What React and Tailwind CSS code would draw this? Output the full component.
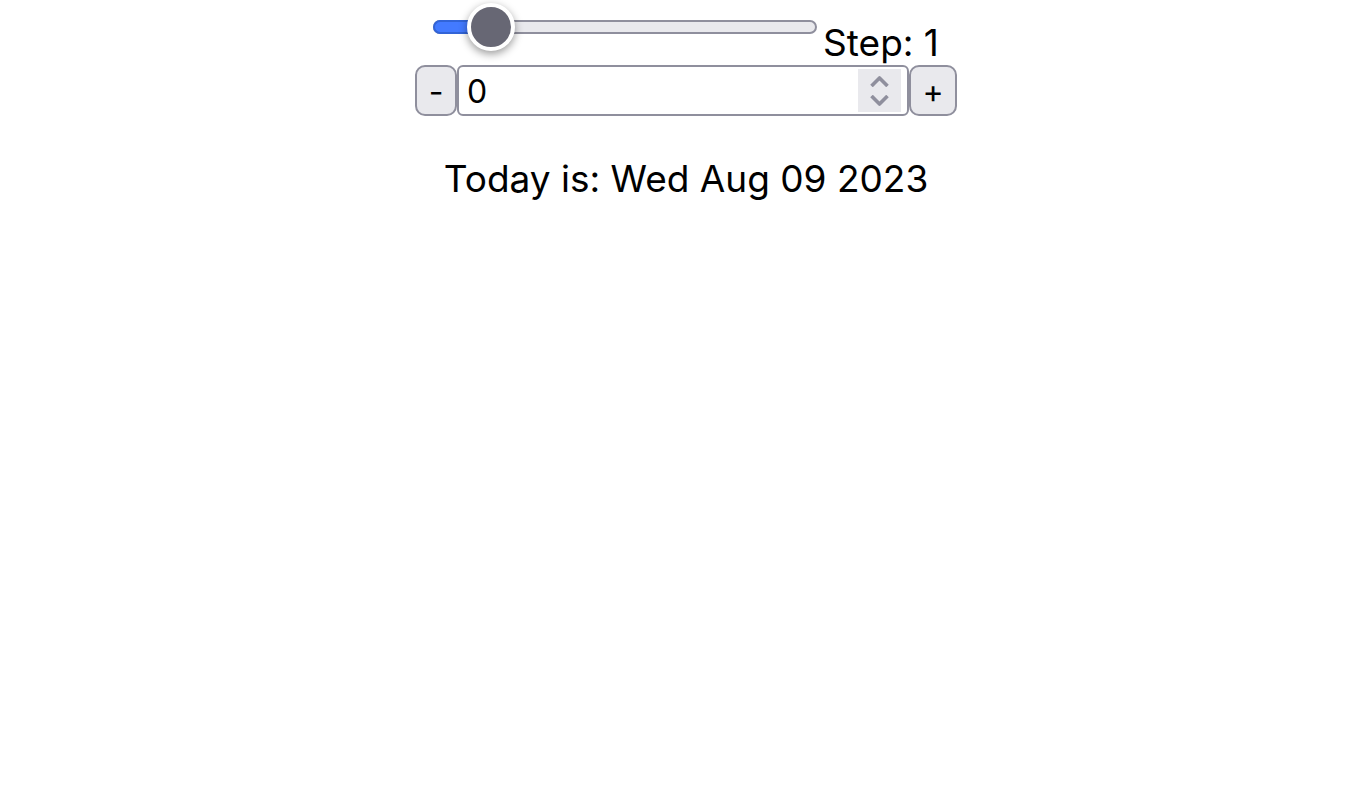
import { useState } from "react";

const BASE_DATE = [2023, 7, 9];

function StepSlider({ value, onChange }) {
  const min = 0;
  const max = 10;
  const ratio = (value - min) / (max - min);
  return (
    <div className="relative flex h-12 w-96 items-center">
      <div className="h-[14px] w-full overflow-hidden rounded-full border-2 border-[#8f8f9d] bg-[#e9e9ed]" />
      <div
        className="absolute left-0 h-[14px] rounded-l-full border-2 border-r-0 border-[#3264d7] bg-[#437aff]"
        style={{ width: `calc(24px + (100% - 48px) * ${ratio})` }}
      />
      <input
        id="step"
        type="range"
        min={min}
        max={max}
        value={value}
        onChange={(e) => onChange(Number(e.target.value))}
        className="absolute inset-0 m-0 w-full cursor-pointer appearance-none bg-transparent outline-none [&::-webkit-slider-thumb]:h-12 [&::-webkit-slider-thumb]:w-12 [&::-webkit-slider-thumb]:appearance-none [&::-webkit-slider-thumb]:rounded-full [&::-webkit-slider-thumb]:border-4 [&::-webkit-slider-thumb]:border-white [&::-webkit-slider-thumb]:bg-[#676774] [&::-webkit-slider-thumb]:shadow-[0_3px_8px_rgba(0,0,0,0.4)]"
      />
    </div>
  );
}

function Chevron({ d }) {
  return (
    <svg width="19" height="12" viewBox="0 0 19 12" fill="none" aria-hidden="true">
      <path d={d} stroke="#8f8f9d" strokeWidth="3.6" strokeLinejoin="round" />
    </svg>
  );
}

export default function App() {
  const [step, setStep] = useState(1);
  const [count, setCount] = useState(0);

  const [year, month, day] = BASE_DATE;
  const date = new Date(year, month, day + count);
  const button =
    "rounded-[10px] border-2 border-[#8f8f9d] bg-[#e9e9ed] pt-[2px] text-center text-[32px] leading-[45px] hover:bg-[#d0d0d7]";

  return (
    <main className="flex flex-col items-center bg-white pt-[3px] pl-3 font-['Inter',sans-serif] text-black">
      <div className="flex h-[62px] gap-[6px]">
        <StepSlider value={step} onChange={setStep} />
        <label htmlFor="step" className="pt-[17px] text-[37px] leading-[46px] whitespace-nowrap">
          Step: {step}
        </label>
      </div>

      <div className="flex h-[51px]">
        <button
          type="button"
          aria-label="Decrease"
          onClick={() => setCount(count - step)}
          className={`${button} w-[42px]`}
        >
          -
        </button>
        <div className="flex w-[452px] items-center rounded-[6px] border-2 border-[#8f8f9d] bg-white pr-[6px] pl-2">
          <input
            type="number"
            aria-label="Days from today"
            value={count}
            onChange={(e) => setCount(Number(e.target.value))}
            className="h-full min-w-0 flex-1 appearance-none bg-transparent pt-[2px] text-[32px] leading-[45px] outline-none [-moz-appearance:textfield] [&::-webkit-inner-spin-button]:appearance-none"
          />
          <div className="flex h-[43px] w-[43px] flex-col items-center justify-center gap-2 bg-[#e9e9ed]">
            <button type="button" aria-label="One day later" onClick={() => setCount(count + 1)}>
              <Chevron d="M1.5 11L9.5 3L17.5 11" />
            </button>
            <button type="button" aria-label="One day earlier" onClick={() => setCount(count - 1)}>
              <Chevron d="M1.5 1L9.5 9L17.5 1" />
            </button>
          </div>
        </div>
        <button
          type="button"
          aria-label="Increase"
          onClick={() => setCount(count + step)}
          className={`${button} w-12`}
        >
          +
        </button>
      </div>

      <p className="mt-10 text-[37px] leading-[46px]">Today is: {date.toDateString()}</p>
    </main>
  );
}
